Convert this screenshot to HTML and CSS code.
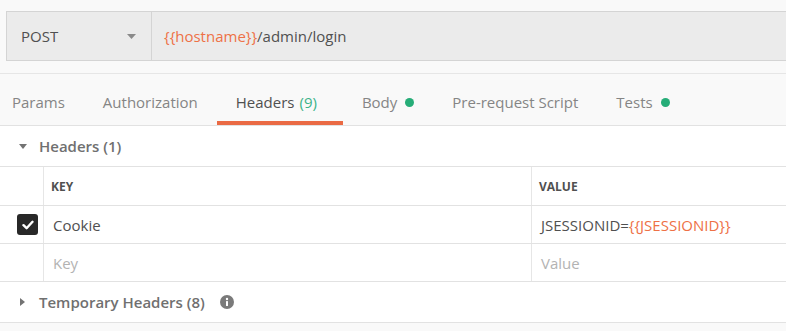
FILE: index.html
```html
<!DOCTYPE html>
<html lang="en">
<head>
    <meta charset="UTF-8">
    <title>Request</title>
    <link rel="stylesheet" href="styles.css">
</head>
<body>
    <div class="request_bar">
        <div class="url_box">
            <div class="method">
                <span>POST</span>
                <svg class="caret" width="9" height="5" viewBox="0 0 9 5"><path d="M0 0H9L4.5 5Z"/></svg>
            </div>
            <div class="url"><span class="var">{{hostname}}</span>/admin/login</div>
        </div>
    </div>

    <div class="tabs">
        <div class="tab">Params</div>
        <div class="tab">Authorization</div>
        <div class="tab active">Headers <span class="count">(9)</span></div>
        <div class="tab">Body <i class="dot"></i></div>
        <div class="tab">Pre-request Script</div>
        <div class="tab">Tests <i class="dot"></i></div>
    </div>

    <div class="panel">
        <div class="section_title">
            <svg class="arrow" width="8" height="5" viewBox="0 0 8 5"><path d="M0 0H8L4 5Z"/></svg>
            <span>Headers (1)</span>
        </div>
        <div class="kv_table">
            <div class="kv_row kv_head">
                <div class="kv_check"></div>
                <div class="kv_key">KEY</div>
                <div class="kv_value">VALUE</div>
            </div>
            <div class="kv_row">
                <div class="kv_check">
                    <span class="checkbox">
                        <svg width="12" height="10" viewBox="0 0 12 10"><path d="M1.5 5.2L4.6 8.2L10.5 1.8" fill="none" stroke="#fff" stroke-width="2.4" stroke-linecap="round" stroke-linejoin="round"/></svg>
                    </span>
                </div>
                <div class="kv_key">Cookie</div>
                <div class="kv_value">JSESSIONID=<span class="var">{{JSESSIONID}}</span></div>
            </div>
            <div class="kv_row">
                <div class="kv_check"></div>
                <div class="kv_key placeholder">Key</div>
                <div class="kv_value placeholder">Value</div>
            </div>
        </div>
        <div class="section_title temp">
            <svg class="arrow" width="5" height="8" viewBox="0 0 5 8"><path d="M0 0V8L5 4Z"/></svg>
            <span>Temporary Headers (8)</span>
            <svg class="info" width="14" height="14" viewBox="0 0 14 14">
                <circle cx="7" cy="7" r="7" fill="#7a7a7a"/>
                <rect x="6" y="6" width="2" height="5" rx="0.5" fill="#fff"/>
                <circle cx="7" cy="4" r="1.2" fill="#fff"/>
            </svg>
        </div>
    </div>
</body>
</html>
```

FILE: styles.css
```css
*{
    margin: 0;
    padding: 0;
    box-sizing: border-box;
}
body{
    width: 786px;
    height: 331px;
    overflow: hidden;
    background: #f9f9f9;
    font-family: "Open Sans", "Liberation Sans", sans-serif;
    font-size: 15px;
    color: #505050;
}
.var{
    color: #ee7146;
}
.request_bar{
    padding: 11px 0 0 6px;
    height: 73px;
}
.url_box{
    display: flex;
    height: 50px;
    background: #ebebeb;
    border: 1px solid #d4d4d4;
    border-right: none;
}
.method{
    width: 145px;
    display: flex;
    align-items: center;
    justify-content: space-between;
    padding: 0 15px 0 14px;
    border-right: 1px solid #d4d4d4;
}
.caret{
    fill: #8a8a8a;
}
.url{
    display: flex;
    align-items: center;
    padding-left: 12px;
}
.tabs{
    display: flex;
    height: 53px;
    border-top: 1px solid #e6e6e6;
    border-bottom: 1px solid #e2e2e2;
}
.tab{
    display: flex;
    align-items: flex-start;
    height: 51px;
    padding: 18px 19px 0;
    line-height: 20px;
    color: #858585;
    border-bottom: 4px solid transparent;
}
.tab:first-child{
    padding-left: 12px;
}
.tab.active{
    padding-right: 26px;
    color: #505050;
    border-bottom-color: #ea6a44;
}
.count{
    color: #3bb38a;
    margin-left: 5px;
}
.dot{
    width: 9px;
    height: 9px;
    border-radius: 50%;
    background: #26ad78;
    margin: 6px 0 0 8px;
}
.panel{
    background: #fff;
    border-bottom: 1px solid #e2e2e2;
}
.section_title{
    display: flex;
    align-items: center;
    height: 41px;
    padding-left: 19px;
    border-bottom: 1px solid #e2e2e2;
    font-weight: 600;
    color: #707070;
}
.section_title .arrow{
    fill: #737373;
    margin-right: 12px;
}
.section_title.temp{
    height: 40px;
    padding-left: 20px;
    border-bottom: none;
}
.section_title.temp .arrow{
    margin-right: 14px;
}
.info{
    margin-left: 15px;
}
.kv_row{
    display: grid;
    grid-template-columns: 43px 488px 1fr;
    height: 38px;
    border-bottom: 1px solid #e2e2e2;
}
.kv_row.kv_head{
    height: 39px;
}
.kv_row > div{
    display: flex;
    align-items: center;
}
.kv_key,.kv_value{
    border-left: 1px solid #e6e6e6;
    padding-left: 9px;
}
.kv_head .kv_key,.kv_head .kv_value{
    padding-left: 7px;
    font-size: 12px;
    font-weight: 700;
    color: #505050;
}
.kv_check{
    justify-content: flex-end;
    padding-right: 5px;
}
.checkbox{
    display: flex;
    align-items: center;
    justify-content: center;
    width: 21px;
    height: 21px;
    border-radius: 3px;
    background: #282828;
}
.placeholder{
    color: #b3b3b3;
}
```
